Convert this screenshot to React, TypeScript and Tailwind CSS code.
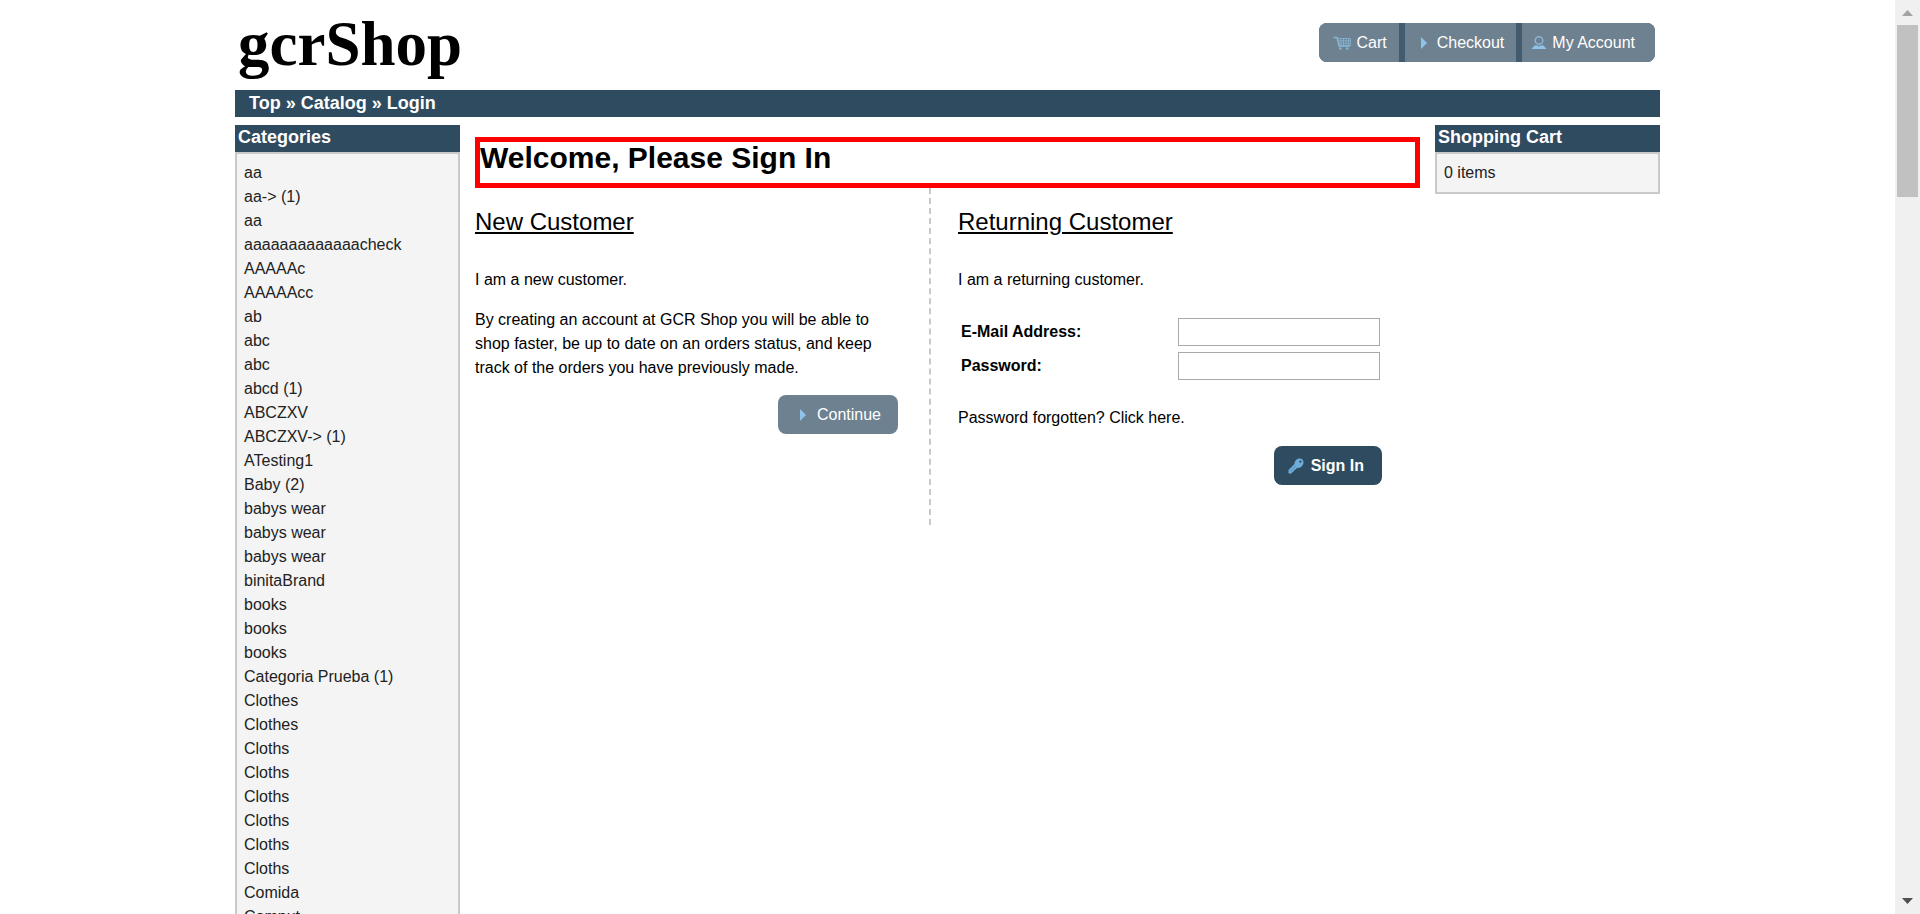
import React from "react";

const categories = [
  "aa", "aa-> (1)", "aa", "aaaaaaaaaaaaacheck", "AAAAAc", "AAAAAcc", "ab", "abc", "abc",
  "abcd (1)", "ABCZXV", "ABCZXV-> (1)", "ATesting1", "Baby (2)", "babys wear", "babys wear",
  "babys wear", "binitaBrand", "books", "books", "books", "Categoria Prueba (1)", "Clothes",
  "Clothes", "Cloths", "Cloths", "Cloths", "Cloths", "Cloths", "Cloths", "Comida", "Comput",
];

function CartIcon() {
  return (
    <svg viewBox="0 0 18 16" className="h-4 w-[18px] shrink-0" fill="none" stroke="#86b6d6" aria-hidden="true">
      <path d="M0.500 2.500h3.500l2 8.500h11" strokeWidth="1.300" />
      <path d="M5 3.500h12.500v7H6.500zM5 5.800h12M6 8.200h11M8 3.500v7M10.500 3.500v7M13 3.500v7M15.500 3.500v7" strokeWidth=".8" />
      <path d="M6 13.500h2.500M13 13.500h2.500" strokeWidth="2" />
    </svg>
  );
}

function PersonIcon() {
  return (
    <svg viewBox="0 0 16 16" className="h-4 w-4 shrink-0" aria-hidden="true">
      <circle cx="8" cy="5.500" r="3.800" fill="none" stroke="#86b6d6" strokeWidth="1.500" />
      <path d="M3.500 10.500h3l1.500 1 1.500-1h3L15.500 14H.5z" fill="#8fc3e8" />
    </svg>
  );
}

function Triangle() {
  return (
    <svg viewBox="0 0 8 12" className="h-3 w-2 shrink-0" aria-hidden="true">
      <path d="M1 0l6 6-6 6z" fill="#8fc3e8" />
    </svg>
  );
}

function KeyIcon() {
  return (
    <svg viewBox="0 0 16 16" className="h-4 w-4 shrink-0" aria-hidden="true">
      <path d="M0.500 15.500v-3.500l6-6c0-3 2-5.500 5-5.500s4 2 4 4-2 5.500-5.500 5.500H9l-1.500 1.500-1 .5-1 1.500-1 .5-1 1.500z" fill="#6eaddb" />
      <circle cx="12.300" cy="3.700" r="1.100" fill="#2f4b5f" />
      <path d="M2 13.500l5.500-5.500" stroke="#4f83a8" strokeWidth=".8" />
    </svg>
  );
}

function InfoBox({ title, children }: { title: string; children: React.ReactNode }) {
  return (
    <section>
      <h2 className="h-[27px] bg-[#2f4b5f] pl-[3px] text-[18px] leading-6 font-bold text-white">{title}</h2>
      <div className="border-2 border-[#c9c9c9] bg-[#f4f4f4] p-[7px] text-[#222]">{children}</div>
    </section>
  );
}

export default function App() {
  return (
    <div className="flex h-screen overflow-hidden bg-white font-['Liberation_Sans',Arial,sans-serif] text-[16px] leading-6 text-black">
      <div className="min-w-0 flex-1 overflow-hidden">
        <div className="mx-auto max-w-[1425px]">
          <header className="flex h-[90px] items-start justify-between pr-[5px]">
            <a href="#" className="pl-[3px] font-['Liberation_Serif',serif] text-[63px] leading-[88px] font-bold">gcrShop</a>
            <nav className="mt-[23px] flex h-[39px] gap-[6px] overflow-hidden rounded-[8px] bg-[#435b6f] leading-[38px] text-white">
              <a href="#" className="flex items-center gap-[5px] bg-[#6e8190] pr-3 pl-[14px]"><CartIcon />Cart</a>
              <a href="#" className="flex items-center gap-[9px] bg-[#6e8190] pr-3 pl-[15px]"><Triangle />Checkout</a>
              <a href="#" className="flex items-center gap-[5px] bg-[#6e8190] pr-5 pl-[9px]"><PersonIcon />My Account</a>
            </nav>
          </header>

          <nav aria-label="Breadcrumb" className="h-[27px] bg-[#2f4b5f] pl-[14px] text-[18px] leading-[26px] font-bold text-white">
            <a href="#">Top</a> » <a href="#">Catalog</a> » <a href="#">Login</a>
          </nav>

          <div className="mt-2 grid grid-cols-[225px_minmax(0,1fr)_225px] items-start gap-[15px]">
            <InfoBox title="Categories">
              <ul>
                {categories.map((name, i) => (
                  <li key={i}><a href="#">{name}</a></li>
                ))}
              </ul>
            </InfoBox>

            <main className="pt-3">
              <h1 className="h-[51px] border-[5px] border-[#ff0000] text-[30px] leading-8 font-bold">Welcome, Please Sign In</h1>
              <div className="grid grid-cols-[456px_minmax(0,1fr)]">
                <section className="h-[337px] border-r-2 border-dashed border-[#c9c9c9] pt-[18px] pr-[31px]">
                  <h2 className="text-[24px] leading-8 underline">New Customer</h2>
                  <p className="mt-[30px]">I am a new customer.</p>
                  <p className="mt-4">By creating an account at GCR Shop you will be able to shop faster, be up to date on an orders status, and keep track of the orders you have previously made.</p>
                  <div className="mt-[15px] flex justify-end">
                    <a href="#" className="flex h-[39px] items-center gap-[10px] rounded-[8px] bg-[#6e8190] pr-[17px] pl-[21px] text-white"><Triangle />Continue</a>
                  </div>
                </section>
                <section className="pt-[18px] pl-[27px]">
                  <h2 className="text-[24px] leading-8 underline">Returning Customer</h2>
                  <p className="mt-[30px]">I am a returning customer.</p>
                  <form className="w-[424px]" onSubmit={(e) => e.preventDefault()}>
                    <div className="mt-[26px] flex flex-col gap-[6px] pr-[2px] pl-[3px]">
                      <div className="flex items-center justify-between">
                        <label htmlFor="email" className="font-bold">E-Mail Address:</label>
                        <input id="email" type="email" className="h-7 w-[202px] border border-[#a9a9a9] px-1" />
                      </div>
                      <div className="flex items-center justify-between">
                        <label htmlFor="password" className="font-bold">Password:</label>
                        <input id="password" type="password" className="h-7 w-[202px] border border-[#a9a9a9] px-1" />
                      </div>
                    </div>
                    <p className="mt-[26px]"><a href="#">Password forgotten? Click here.</a></p>
                    <div className="mt-4 flex justify-end">
                      <button type="submit" className="flex h-[39px] items-center gap-[7px] rounded-[8px] bg-[#2f4b5f] pr-[18px] pl-[14px] font-bold text-white"><KeyIcon />Sign In</button>
                    </div>
                  </form>
                </section>
              </div>
            </main>

            <InfoBox title="Shopping Cart">0 items</InfoBox>
          </div>
        </div>
      </div>

      <div aria-hidden="true" className="flex w-[25px] shrink-0 flex-col items-center bg-[#f0f0f0]">
        <svg viewBox="0 0 11 6" className="mt-[10px] h-[6px] w-[11px]"><path d="M0 6l5.500-6 5.500 6z" fill="#a3a3a3" /></svg>
        <div className="mt-[9px] h-[172px] w-[21px] bg-[#c1c1c1]" />
        <svg viewBox="0 0 11 6" className="mt-auto mb-[10px] h-[6px] w-[11px]"><path d="M0 0h11l-5.500 6z" fill="#505050" /></svg>
      </div>
    </div>
  );
}
